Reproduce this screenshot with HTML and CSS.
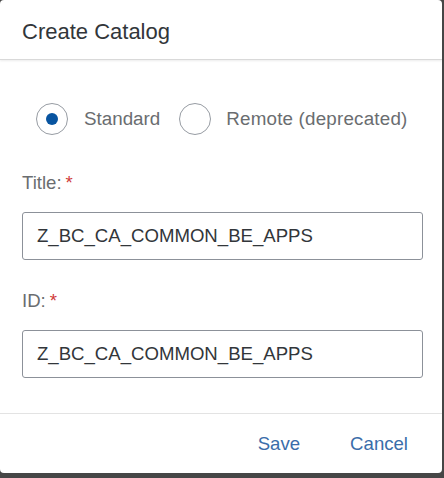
FILE: index.html
```html
<!DOCTYPE html>
<html lang="en">
<head>
<meta charset="utf-8">
<title>Create Catalog</title>
<link rel="stylesheet" href="styles.css">
</head>
<body>
<div class="dialog">
  <header class="dialog-header">
    <h1 class="dialog-title">Create Catalog</h1>
  </header>
  <main class="dialog-content">
    <div class="radio-group">
      <label class="radio">
        <span class="radio-circle radio-circle--selected"><span class="radio-dot"></span></span>
        <span class="radio-text">Standard</span>
      </label>
      <label class="radio">
        <span class="radio-circle"></span>
        <span class="radio-text radio-text--wide">Remote (deprecated)</span>
      </label>
    </div>
    <div class="field field--first">
      <div class="field-label">Title:<span class="required">*</span></div>
      <div class="field-input">Z_BC_CA_COMMON_BE_APPS</div>
    </div>
    <div class="field">
      <div class="field-label">ID:<span class="required">*</span></div>
      <div class="field-input">Z_BC_CA_COMMON_BE_APPS</div>
    </div>
  </main>
  <footer class="dialog-footer">
    <button class="btn">Save</button>
    <button class="btn">Cancel</button>
  </footer>
</div>
</body>
</html>
```

FILE: styles.css
```css
html, body {
  margin: 0;
  padding: 0;
}
body {
  background: #464646;
  width: 444px;
  height: 478px;
  overflow: hidden;
  font-family: "Liberation Sans", Arial, sans-serif;
}
.dialog {
  width: 442px;
  height: 473px;
  background: #ffffff;
  border-radius: 4px;
  display: flex;
  flex-direction: column;
  overflow: hidden;
}
.dialog-header {
  box-sizing: border-box;
  height: 60px;
  padding: 19px 0 0 22px;
  border-bottom: 1px solid #d9d9d9;
  box-shadow: 0 1px 2px rgba(0, 0, 0, 0.08);
  position: relative;
  z-index: 1;
}
.dialog-title {
  margin: 0;
  font-size: 22px;
  line-height: 26px;
  font-weight: normal;
  color: #32363a;
}
.dialog-content {
  flex: 1;
  padding: 43px 19px 0 22px;
}
.radio-group {
  display: flex;
  align-items: center;
  height: 32px;
  margin-left: 14px;
}
.radio {
  display: flex;
  align-items: center;
}
.radio + .radio {
  margin-left: 19px;
}
.radio-circle {
  box-sizing: border-box;
  width: 32px;
  height: 32px;
  border: 1.5px solid #979ca3;
  border-radius: 50%;
  display: flex;
  align-items: center;
  justify-content: center;
}
.radio-dot {
  width: 12px;
  height: 12px;
  border-radius: 50%;
  background: #0854a0;
}
.radio-text {
  margin-left: 16px;
  font-size: 18.8px;
  line-height: 22px;
  color: #6a6d70;
}
.radio-text--wide {
  margin-left: 15px;
  letter-spacing: 0.2px;
}
.field--first {
  margin-top: 37px;
}
.field + .field {
  margin-top: 30px;
}
.field-label {
  font-size: 18.6px;
  line-height: 22px;
  color: #6a6d70;
  margin-bottom: 18px;
}
.required {
  color: #d03b3b;
  margin-left: 4px;
}
.field-input {
  box-sizing: border-box;
  width: 401px;
  height: 48px;
  border: 1px solid #8c9199;
  border-radius: 3px;
  padding-left: 14px;
  display: flex;
  align-items: center;
  font-size: 18.6px;
  color: #32363a;
}
.dialog-footer {
  box-sizing: border-box;
  height: 60px;
  border-top: 1px solid #e3e3e3;
  display: flex;
  justify-content: flex-end;
  align-items: center;
  gap: 18px;
  padding-right: 18px;
}
.btn {
  background: transparent;
  border: none;
  padding: 0 16px;
  font-family: "Liberation Sans", Arial, sans-serif;
  font-size: 18.6px;
  line-height: 22px;
  color: #3a6daa;
  cursor: pointer;
}
```
